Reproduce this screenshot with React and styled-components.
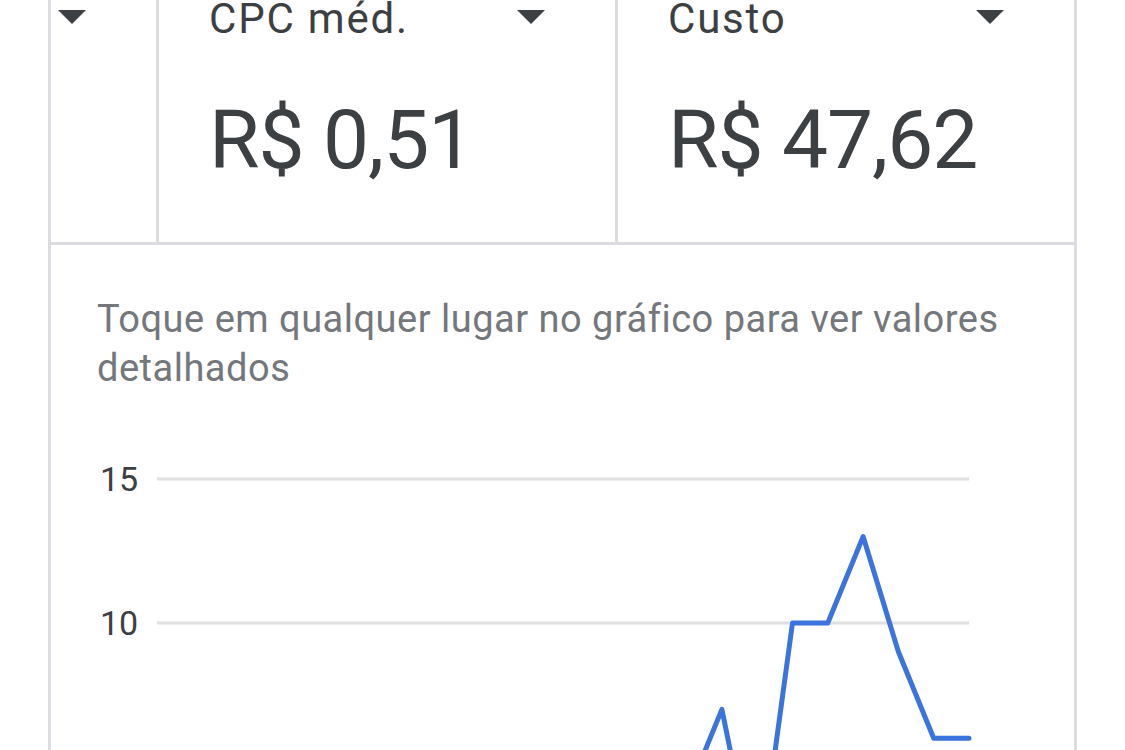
import React from 'react';
import styled, { createGlobalStyle } from 'styled-components';

const GlobalStyle = createGlobalStyle`
  body {
    margin: 0;
    background: #ffffff;
    font-family: Roboto, "Noto Sans", Arial, sans-serif;
    color: #3c4043;
  }
`;

const Page = styled.div`
  padding: 0 48px;
`;

const Card = styled.div`
  margin-top: -5px;
  border: 3px solid #dadce0;
  border-top: none;
  background: #fff;
`;

const MetricRow = styled.div`
  display: flex;
  justify-content: flex-end;
  overflow: hidden;
  border-bottom: 3px solid #dadce0;
`;

const MetricCell = styled.div`
  flex: 0 0 459px;
  box-sizing: border-box;
  padding: 0 70px 61px 50px;
  border-right: 3px solid #dadce0;

  &:last-child {
    flex-basis: 456px;
    border-right: none;
  }
`;

const CellHead = styled.div`
  display: flex;
  align-items: center;
  justify-content: space-between;
  height: 48px;
`;

const Title = styled.div`
  font-size: 42px;
  line-height: 48px;
  letter-spacing: 1.8px;
  color: #3c4043;
  white-space: nowrap;
`;

const Caret = styled.svg`
  width: 28px;
  height: 14px;
  flex: none;
  margin-top: -5px;
`;

const Value = styled.div`
  margin-top: 56px;
  font-size: 82px;
  line-height: 82px;
  letter-spacing: -1px;
  color: #3c4043;
  white-space: nowrap;
`;

const ChartSection = styled.div`
  padding: 50px 0 0 46px;
`;

const Hint = styled.p`
  margin: 0;
  max-width: 940px;
  font-size: 38px;
  line-height: 49px;
  letter-spacing: 0.5px;
  color: #74777b;
`;

const ChartSvg = styled.svg`
  display: block;
  margin-left: -46px;
  width: 1023px;
  height: 420px;
`;

const AxisLabel = styled.text`
  font-family: Roboto, Arial, sans-serif;
  font-size: 34px;
  fill: #3c4043;
`;

const metrics = [
  { title: 'Cliques', value: '93' },
  { title: 'CPC méd.', value: 'R$ 0,51' },
  { title: 'Custo', value: 'R$ 47,62' },
];

// daily values, only the tail is visible in the crop
const series = [2, 3, 1, 2, 3, 2, 4, 3, 2, 1, 3, 2, 4, 3, 5, 4, 7, 1, 10, 10, 13, 9, 6, 6];

const X0 = 106;
const X1 = 918;
const Y10 = 230;
const UNIT = 28.8;

const toY = (v) => Y10 + (10 - v) * UNIT;
const toX = (i) => X0 + (i * (X1 - X0)) / (series.length - 1);

function DropCaret() {
  return (
    <Caret viewBox="0 0 28 14">
      <polygon points="0,0 28,0 14,14" fill="#3c4043" />
    </Caret>
  );
}

function Chart() {
  const points = series.map((v, i) => `${toX(i).toFixed(1)},${toY(v).toFixed(1)}`).join(' ');
  return (
    <ChartSvg viewBox="0 0 1023 420">
      {[15, 10, 5].map((t) => (
        <g key={t}>
          <line x1={X0} x2={X1} y1={toY(t)} y2={toY(t)} stroke="#e0e0e0" strokeWidth="3" />
          <AxisLabel x="49" y={toY(t) + 12}>{t}</AxisLabel>
        </g>
      ))}
      <polyline
        points={points}
        fill="none"
        stroke="#3a74dc"
        strokeWidth="5"
        strokeLinejoin="round"
        strokeLinecap="round"
      />
    </ChartSvg>
  );
}

export default function App() {
  return (
    <>
      <GlobalStyle />
      <Page>
        <Card>
          <MetricRow>
            {metrics.map((m) => (
              <MetricCell key={m.title}>
                <CellHead>
                  <Title>{m.title}</Title>
                  <DropCaret />
                </CellHead>
                <Value>{m.value}</Value>
              </MetricCell>
            ))}
          </MetricRow>
          <ChartSection>
            <Hint>Toque em qualquer lugar no gráfico para ver valores detalhados</Hint>
            <Chart />
          </ChartSection>
        </Card>
      </Page>
    </>
  );
}
